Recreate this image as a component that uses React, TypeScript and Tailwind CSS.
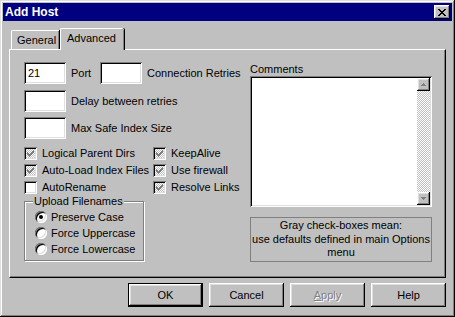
import React from 'react';

const raised =
  'shadow-[inset_-1px_-1px_0_#000,inset_1px_1px_0_#fff,inset_-2px_-2px_0_#808080,inset_2px_2px_0_#dfdfdf]';
const sunken =
  'shadow-[inset_1px_1px_0_#808080,inset_-1px_-1px_0_#fff,inset_2px_2px_0_#000,inset_-2px_-2px_0_#dfdfdf]';
const dither =
  'bg-[image:repeating-conic-gradient(#fff_0_25%,#c0c0c0_0_50%)] bg-[length:2px_2px]';

// classic 7x7 check: 3px vertical runs per column
const checkCols: [number, number][] = [
  [3, 5],
  [4, 6],
  [5, 7],
  [6, 6],
  [7, 5],
  [8, 4],
  [9, 3],
];

// close glyph, [x, y, w] runs
const closeRuns: [number, number, number][] = [
  [0, 0, 2], [6, 0, 2],
  [1, 1, 2], [5, 1, 2],
  [2, 2, 4],
  [3, 3, 2],
  [2, 4, 4],
  [1, 5, 2], [5, 5, 2],
  [0, 6, 2], [6, 6, 2],
];

function CheckMark({ color }: { color: string }) {
  return (
    <svg width="13" height="13" viewBox="0 0 13 13" className="absolute left-0 top-0" shapeRendering="crispEdges">
      {checkCols.map(([x, y]) => (
        <rect key={x} x={x} y={y} width="1" height="3" fill={color} />
      ))}
    </svg>
  );
}

function Check({ label, state }: { label: string; state: 'gray' | 'off' }) {
  return (
    <div className="flex items-center h-[17px]">
      <div className={`relative w-[13px] h-[13px] shrink-0 ${sunken} ${state === 'gray' ? dither : 'bg-white'}`}>
        {state === 'gray' && <CheckMark color="#808080" />}
      </div>
      <span className="ml-[5px] whitespace-nowrap">{label}</span>
    </div>
  );
}

function Radio({ label, on }: { label: string; on?: boolean }) {
  return (
    <div className="flex items-center h-[16px]">
      <div className={`relative w-[12px] h-[12px] rounded-full bg-white shrink-0 ${sunken}`}>
        {on && <div className="absolute left-[4px] top-[4px] w-[4px] h-[4px] rounded-full bg-black" />}
      </div>
      <span className="ml-[4px] whitespace-nowrap">{label}</span>
    </div>
  );
}

function Field({ value, className = '' }: { value?: string; className?: string }) {
  return (
    <div className={`w-[42px] h-[22px] bg-white shrink-0 ${sunken} pl-[4px] pt-[3px] leading-[16px] ${className}`}>
      {value}
    </div>
  );
}

function Button({ children, isDefault }: { children: React.ReactNode; isDefault?: boolean }) {
  if (isDefault) {
    return (
      <div className="w-[75px] h-[24px] border border-black">
        <div className={`w-full h-full flex items-center justify-center ${raised}`}>{children}</div>
      </div>
    );
  }
  return <div className={`w-[75px] h-[24px] flex items-center justify-center ${raised}`}>{children}</div>;
}

export default function App() {
  return (
    <div
      className="w-[455px] h-[317px] bg-[#c0c0c0] p-[3px] flex flex-col text-[11px] text-black shadow-[inset_-1px_-1px_0_#000,inset_1px_1px_0_#dfdfdf,inset_-2px_-2px_0_#808080,inset_2px_2px_0_#fff]"
      style={{ fontFamily: '"Liberation Sans", Arial, sans-serif' }}
    >
      {/* title bar */}
      <div className="h-[18px] bg-[#000080] flex items-center justify-between pl-[2px] pr-[2px]">
        <span className="text-white font-bold text-[12px] leading-none">Add Host</span>
        <div className={`w-[16px] h-[14px] bg-[#c0c0c0] flex items-center justify-center ${raised}`}>
          <svg width="8" height="7" viewBox="0 0 8 7" shapeRendering="crispEdges">
            {closeRuns.map(([x, y, w], i) => (
              <rect key={i} x={x} y={y} width={w} height="1" fill="#000" />
            ))}
          </svg>
        </div>
      </div>

      <div className="px-[6px] pt-[7px] flex flex-col">
        {/* tabs */}
        <div className="flex items-end h-[21px] pl-[2px]">
          <div className="h-[19px] w-[48px] bg-[#c0c0c0] border-t border-l border-white rounded-tl-[2px] shadow-[inset_-1px_0_0_#808080,1px_0_0_#000] flex items-center pl-[5px]">
            General
          </div>
          <div className="relative z-10 -mb-px h-[22px] w-[64px] ml-px bg-[#c0c0c0] border-t border-l border-white rounded-tl-[2px] rounded-tr-[2px] shadow-[inset_-1px_0_0_#808080,1px_0_0_#000] flex items-center pl-[6px] pb-[2px]">
            Advanced
          </div>
        </div>

        {/* panel */}
        <div className="h-[229px] border-t border-l border-white border-r border-b border-r-black border-b-black shadow-[inset_-1px_-1px_0_#808080] flex pl-[14px] pt-[12px]">
          {/* left column */}
          <div className="w-[226px] flex flex-col">
            <div className="flex items-center">
              <Field value="21" />
              <span className="w-[34px] pl-[5px]">Port</span>
              <Field />
              <span className="pl-[5px] whitespace-nowrap">Connection Retries</span>
            </div>
            <div className="flex items-center mt-[6px]">
              <Field />
              <span className="pl-[5px]">Delay between retries</span>
            </div>
            <div className="flex items-center mt-[5px]">
              <Field />
              <span className="pl-[5px]">Max Safe Index Size</span>
            </div>

            <div className="flex mt-[6px]">
              <div className="w-[129px] flex flex-col">
                <Check label="Logical Parent Dirs" state="gray" />
                <Check label="Auto-Load Index Files" state="gray" />
                <Check label="AutoRename" state="off" />
              </div>
              <div className="flex flex-col">
                <Check label="KeepAlive" state="gray" />
                <Check label="Use firewall" state="gray" />
                <Check label="Resolve Links" state="gray" />
              </div>
            </div>

            <div className="relative mt-[5px] w-[120px] h-[60px] border border-[#808080] shadow-[1px_1px_0_#fff,inset_1px_1px_0_#fff] pl-[10px] pt-[7px] flex flex-col">
              <span className="absolute -top-[8px] left-[8px] bg-[#c0c0c0] px-[1px] leading-[14px]">Upload Filenames</span>
              <Radio label="Preserve Case" on />
              <Radio label="Force Uppercase" />
              <Radio label="Force Lowercase" />
            </div>
          </div>

          {/* right column */}
          <div className="w-[182px] flex flex-col">
            <div className="h-[14px] leading-[14px]">Comments</div>
            <div className={`h-[131px] bg-white ${sunken} flex justify-end p-[2px]`}>
              <div className={`w-[13px] h-full flex flex-col justify-between ${dither}`}>
                <div className={`w-[13px] h-[13px] bg-[#c0c0c0] ${raised} flex items-center justify-center`}>
                  <svg width="5" height="3" viewBox="0 0 5 3" shapeRendering="crispEdges">
                    <path d="M2 0h1v1h1v1h1v1H0V2h1V1h1z" fill="#808080" />
                  </svg>
                </div>
                <div className={`w-[13px] h-[13px] bg-[#c0c0c0] ${raised} flex items-center justify-center`}>
                  <svg width="5" height="3" viewBox="0 0 5 3" shapeRendering="crispEdges">
                    <path d="M0 0h5v1H4v1H3v1H2V2H1V1H0z" fill="#808080" />
                  </svg>
                </div>
              </div>
            </div>
            <div className="mt-[10px] h-[45px] border border-[#808080] flex flex-col items-center justify-center text-center leading-[13.5px]">
              <span>Gray check-boxes mean:</span>
              <span className="whitespace-nowrap">use defaults defined in main Options</span>
              <span>menu</span>
            </div>
          </div>
        </div>

        {/* buttons */}
        <div className="flex justify-end gap-[6px] mt-[5px]">
          <Button isDefault>OK</Button>
          <Button>Cancel</Button>
          <Button>
            <span className="text-[#808080] [text-shadow:1px_1px_0_#fff]">
              <span className="underline">A</span>pply
            </span>
          </Button>
          <Button>Help</Button>
        </div>
      </div>
    </div>
  );
}
